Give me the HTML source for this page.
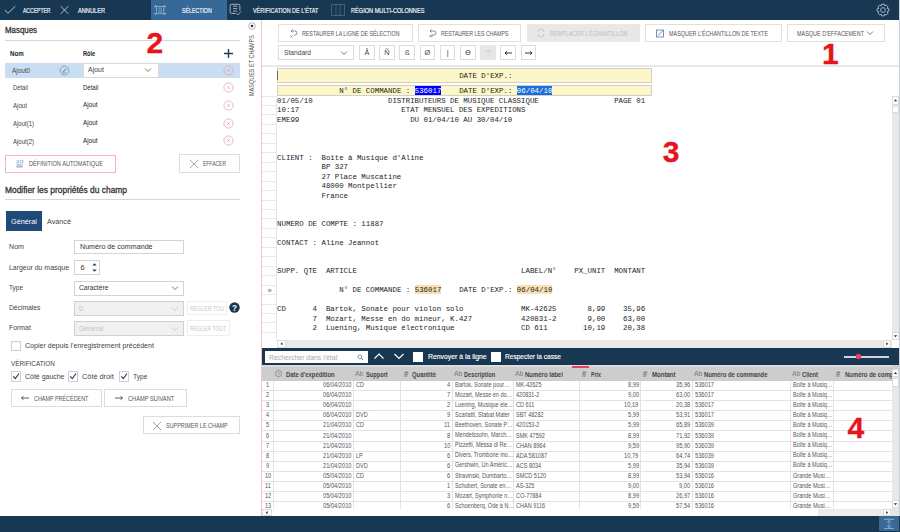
<!DOCTYPE html>
<html><head><meta charset="utf-8"><style>
html,body{margin:0;padding:0;width:900px;height:532px;overflow:hidden;background:#fff}
.a{position:absolute;display:block}
.t{position:absolute;white-space:pre;font-family:"Liberation Sans",sans-serif}
svg.a{overflow:visible}
</style></head><body>
<div class="a" style="left:0px;top:0px;width:900px;height:20px;background:#173753;"></div>
<svg class="a" style="left:0px;top:0px;" width="20" height="20" viewBox="0 0 20 20"><polyline points="5,10 7.9,13.3 15.4,6.2" fill="none" stroke="#c2cdd9" stroke-width="0.9"/></svg>
<div class="t" style="left:23.00px;top:0.78px;line-height:20px;font-size:7.000px;font-weight:400;color:#eef2f6;font-family:'Liberation Sans', sans-serif;transform:scaleX(0.7215);transform-origin:0 0;-webkit-text-stroke:0.2px #eef2f6;">ACCEPTER</div>
<svg class="a" style="left:56px;top:0px;" width="16" height="20" viewBox="0 0 16 20"><path d="M4.7,6.2 L12.3,13.8 M12.3,6.2 L4.7,13.8" stroke="#c2cdd9" stroke-width="0.9"/></svg>
<div class="t" style="left:77.50px;top:0.78px;line-height:20px;font-size:7.000px;font-weight:400;color:#eef2f6;font-family:'Liberation Sans', sans-serif;transform:scaleX(0.8071);transform-origin:0 0;-webkit-text-stroke:0.2px #eef2f6;">ANNULER</div>
<div class="a" style="left:151px;top:0px;width:76px;height:20px;background:#366997;"></div>
<svg class="a" style="left:148px;top:0px;" width="24" height="20" viewBox="0 0 24 20"><rect x="8.6" y="6.5" width="7.2" height="7.2" fill="none" stroke="#9cb7d3" stroke-width="0.8"/><path d="M10.2,8.2h3.7M10.2,10.1h3.7M10.2,12h3.7" stroke="#8fadcc" stroke-width="0.8"/><path d="M6.6,7.2a1.6,1.6 0 0 1 1.6,-1.6 M17.6,7.2a1.6,1.6 0 0 0 -1.6,-1.6 M6.6,13a1.6,1.6 0 0 0 1.6,1.6 M17.6,13a1.6,1.6 0 0 1 -1.6,1.6" fill="none" stroke="#b0c6dd" stroke-width="1"/></svg>
<div class="t" style="left:182.00px;top:0.78px;line-height:20px;font-size:7.000px;font-weight:400;color:#eef2f6;font-family:'Liberation Sans', sans-serif;transform:scaleX(0.7486);transform-origin:0 0;-webkit-text-stroke:0.2px #eef2f6;">SÉLECTION</div>
<svg class="a" style="left:228px;top:2px;" width="16" height="16" viewBox="0 0 16 16"><path d="M11.9,8.5V3.8a1.5,1.5 0 0 0 -1.5,-1.5H3.6a1.5,1.5 0 0 0 -1.5,1.5V10a1.5,1.5 0 0 0 1.5,1.5H7.6" fill="none" stroke="#b3c1cf" stroke-width="0.9"/><path d="M5,4.2h4.3M5,6.6h4.3M5,9.1h4.3" stroke="#aab8c7" stroke-width="0.9"/><path d="M8.4,11.4L9.8,12.8 13,9.6" fill="none" stroke="#b3c1cf" stroke-width="0.9"/></svg>
<div class="t" style="left:252.50px;top:0.78px;line-height:20px;font-size:7.000px;font-weight:400;color:#eef2f6;font-family:'Liberation Sans', sans-serif;transform:scaleX(0.7757);transform-origin:0 0;-webkit-text-stroke:0.2px #eef2f6;">VÉRIFICATION DE L&#x27;ÉTAT</div>
<svg class="a" style="left:330px;top:2px;" width="16" height="16" viewBox="0 0 16 16"><rect x="1.5" y="2.5" width="13" height="11" fill="none" stroke="#8797a8" stroke-width="0.8" stroke-dasharray="1,1"/><path d="M6,2.5v11M10,2.5v11" stroke="#8797a8" stroke-width="0.8" stroke-dasharray="1,1"/></svg>
<div class="t" style="left:351.00px;top:0.78px;line-height:20px;font-size:7.000px;font-weight:400;color:#eef2f6;font-family:'Liberation Sans', sans-serif;transform:scaleX(0.8008);transform-origin:0 0;-webkit-text-stroke:0.2px #eef2f6;">RÉGION MULTI-COLONNES</div>
<svg class="a" style="left:876px;top:3px;" width="14" height="14" viewBox="0 0 14 14"><circle cx="7" cy="7" r="2.4" fill="none" stroke="#aebccb" stroke-width="0.9"/><path d="M11.21,5.41 L12.86,5.69 L12.86,8.31 L11.21,8.59 L11.10,8.86 L12.07,10.21 L10.21,12.07 L8.86,11.10 L8.59,11.21 L8.31,12.86 L5.69,12.86 L5.41,11.21 L5.14,11.10 L3.79,12.07 L1.93,10.21 L2.90,8.86 L2.79,8.59 L1.14,8.31 L1.14,5.69 L2.79,5.41 L2.90,5.14 L1.93,3.79 L3.79,1.93 L5.14,2.90 L5.41,2.79 L5.69,1.14 L8.31,1.14 L8.59,2.79 L8.86,2.90 L10.21,1.93 L12.07,3.79 L11.10,5.14Z" fill="none" stroke="#aebccb" stroke-width="0.9" stroke-linejoin="round"/></svg>
<div class="t" style="left:5.30px;top:20.09px;line-height:20px;font-size:9.000px;font-weight:400;color:#333;font-family:'Liberation Sans', sans-serif;transform:scaleX(0.8763);transform-origin:0 0;-webkit-text-stroke:0.3px #333;">Masques</div>
<div class="a" style="left:5px;top:40px;width:235px;height:1px;background:#d6d6d6;"></div>
<div class="t" style="left:10.20px;top:43.97px;line-height:20px;font-size:7.300px;font-weight:700;color:#222;font-family:'Liberation Sans', sans-serif;transform:scaleX(0.8384);transform-origin:0 0;">Nom</div>
<div class="t" style="left:83.00px;top:43.77px;line-height:20px;font-size:7.300px;font-weight:700;color:#222;font-family:'Liberation Sans', sans-serif;transform:scaleX(0.7712);transform-origin:0 0;">Rôle</div>
<svg class="a" style="left:223px;top:48px;" width="11" height="11" viewBox="0 0 11 11"><path d="M5.5,1v9M1,5.5h9" stroke="#1d3d5f" stroke-width="1.4"/></svg>
<div class="a" style="left:5px;top:63px;width:235px;height:14.7px;background:#c9ddf3;"></div>
<div class="t" style="left:12.10px;top:61.17px;line-height:20px;font-size:7.400px;font-weight:400;color:#444;font-family:'Liberation Sans', sans-serif;transform:scaleX(0.8579);transform-origin:0 0;">Ajout0</div>
<svg class="a" style="left:58.5px;top:64.7px;" width="11" height="11" viewBox="0 0 11 11"><circle cx="5.5" cy="5.5" r="4.4" fill="none" stroke="#7094bb" stroke-width="0.8"/><path d="M3.6,7.4 L7.4,3.6" stroke="#7094bb" stroke-width="1.2"/><path d="M3,8.2 Q4.5,7.2 7.5,8" fill="none" stroke="#7094bb" stroke-width="0.7"/></svg>
<div class="a" style="left:83px;top:62.6px;width:75.5px;height:15.1px;background:#fff;border:1px solid #dadada;box-sizing:border-box;"></div>
<div class="t" style="left:88.00px;top:60.39px;line-height:20px;font-size:7.000px;font-weight:400;color:#444;font-family:'Liberation Sans', sans-serif;">Ajout</div>
<svg class="a" style="left:144px;top:67px;" width="8" height="6" viewBox="0 0 8 6"><polyline points="1,1.5 4,4.5 7,1.5" fill="none" stroke="#555" stroke-width="0.8"/></svg>
<svg class="a" style="left:223px;top:64.7px;" width="11" height="11" viewBox="0 0 11 11"><circle cx="5.5" cy="5.5" r="4.6" fill="none" stroke="#e4a4a8" stroke-width="0.75"/><path d="M3.9,3.9L7.1,7.1M7.1,3.9L3.9,7.1" stroke="#e4a4a8" stroke-width="0.7"/></svg>
<svg class="a" style="left:223px;top:82.3px;" width="11" height="11" viewBox="0 0 11 11"><circle cx="5.5" cy="5.5" r="4.6" fill="none" stroke="#e4a4a8" stroke-width="0.75"/><path d="M3.9,3.9L7.1,7.1M7.1,3.9L3.9,7.1" stroke="#e4a4a8" stroke-width="0.7"/></svg>
<svg class="a" style="left:223px;top:100.0px;" width="11" height="11" viewBox="0 0 11 11"><circle cx="5.5" cy="5.5" r="4.6" fill="none" stroke="#e4a4a8" stroke-width="0.75"/><path d="M3.9,3.9L7.1,7.1M7.1,3.9L3.9,7.1" stroke="#e4a4a8" stroke-width="0.7"/></svg>
<svg class="a" style="left:223px;top:117.7px;" width="11" height="11" viewBox="0 0 11 11"><circle cx="5.5" cy="5.5" r="4.6" fill="none" stroke="#e4a4a8" stroke-width="0.75"/><path d="M3.9,3.9L7.1,7.1M7.1,3.9L3.9,7.1" stroke="#e4a4a8" stroke-width="0.7"/></svg>
<svg class="a" style="left:223px;top:135.4px;" width="11" height="11" viewBox="0 0 11 11"><circle cx="5.5" cy="5.5" r="4.6" fill="none" stroke="#e4a4a8" stroke-width="0.75"/><path d="M3.9,3.9L7.1,7.1M7.1,3.9L3.9,7.1" stroke="#e4a4a8" stroke-width="0.7"/></svg>
<div class="t" style="left:12.80px;top:78.48px;line-height:20px;font-size:7.200px;font-weight:400;color:#444;font-family:'Liberation Sans', sans-serif;transform:scaleX(0.8149);transform-origin:0 0;">Détail</div>
<div class="t" style="left:82.70px;top:77.68px;line-height:20px;font-size:7.200px;font-weight:400;color:#222;font-family:'Liberation Sans', sans-serif;transform:scaleX(0.8366);transform-origin:0 0;">Détail</div>
<div class="t" style="left:12.80px;top:95.98px;line-height:20px;font-size:7.200px;font-weight:400;color:#444;font-family:'Liberation Sans', sans-serif;transform:scaleX(0.8531);transform-origin:0 0;">Ajout</div>
<div class="t" style="left:82.70px;top:95.18px;line-height:20px;font-size:7.200px;font-weight:400;color:#222;font-family:'Liberation Sans', sans-serif;transform:scaleX(0.8836);transform-origin:0 0;">Ajout</div>
<div class="t" style="left:12.80px;top:113.78px;line-height:20px;font-size:7.200px;font-weight:400;color:#444;font-family:'Liberation Sans', sans-serif;transform:scaleX(0.8330);transform-origin:0 0;">Ajout(1)</div>
<div class="t" style="left:82.70px;top:112.98px;line-height:20px;font-size:7.200px;font-weight:400;color:#222;font-family:'Liberation Sans', sans-serif;transform:scaleX(0.8836);transform-origin:0 0;">Ajout</div>
<div class="t" style="left:12.80px;top:131.58px;line-height:20px;font-size:7.200px;font-weight:400;color:#444;font-family:'Liberation Sans', sans-serif;transform:scaleX(0.8330);transform-origin:0 0;">Ajout(2)</div>
<div class="t" style="left:82.70px;top:130.68px;line-height:20px;font-size:7.200px;font-weight:400;color:#222;font-family:'Liberation Sans', sans-serif;transform:scaleX(0.8836);transform-origin:0 0;">Ajout</div>
<div class="t" style="left:146.47px;top:23.21px;line-height:40px;font-size:30px;font-weight:700;color:#e8141c;-webkit-text-stroke:0.35px #e8141c">2</div>
<div class="a" style="left:5px;top:154.6px;width:111px;height:18px;background:#fff;border:1px solid #f9b4c4;box-sizing:border-box;"></div>
<svg class="a" style="left:15px;top:158px;" width="10" height="10" viewBox="0 0 10 10"><path d="M1.5,3h2.5M1.5,5h2.5M1.5,7h6" stroke="#8ea4bb" stroke-width="1"/><path d="M1.3,8.8h6.5" stroke="#8ea4bb" stroke-width="1.2"/><circle cx="6.6" cy="3.6" r="1.5" fill="none" stroke="#8ea4bb" stroke-width="0.9"/></svg>
<div class="t" style="left:28.50px;top:154.48px;line-height:20px;font-size:6.500px;font-weight:400;color:#555;font-family:'Liberation Sans', sans-serif;transform:scaleX(0.8670);transform-origin:0 0;">DÉFINITION AUTOMATIQUE</div>
<div class="a" style="left:179.4px;top:154.4px;width:60.6px;height:18.4px;background:#fff;border:1px solid #dddddd;box-sizing:border-box;"></div>
<svg class="a" style="left:189px;top:159px;" width="10" height="10" viewBox="0 0 10 10"><path d="M1,1L9,9M9,1L1,9" stroke="#7d93aa" stroke-width="0.8"/></svg>
<div class="t" style="left:203.30px;top:154.48px;line-height:20px;font-size:6.500px;font-weight:400;color:#555;font-family:'Liberation Sans', sans-serif;transform:scaleX(0.7673);transform-origin:0 0;">EFFACER</div>
<div class="t" style="left:5.10px;top:179.59px;line-height:20px;font-size:9.000px;font-weight:400;color:#333;font-family:'Liberation Sans', sans-serif;transform:scaleX(0.9344);transform-origin:0 0;-webkit-text-stroke:0.3px #333;">Modifier les propriétés du champ</div>
<div class="a" style="left:5px;top:199px;width:235px;height:1px;background:#d6d6d6;"></div>
<div class="a" style="left:6.3px;top:211.4px;width:35.6px;height:19.6px;background:#1f4a77;"></div>
<div class="t" style="left:11.00px;top:211.95px;line-height:20px;font-size:7.800px;font-weight:400;color:#ffffff;font-family:'Liberation Sans', sans-serif;transform:scaleX(0.9370);transform-origin:0 0;">Général</div>
<div class="t" style="left:47.00px;top:211.95px;line-height:20px;font-size:7.800px;font-weight:400;color:#444;font-family:'Liberation Sans', sans-serif;transform:scaleX(0.9275);transform-origin:0 0;">Avancé</div>
<div class="t" style="left:8.90px;top:237.17px;line-height:20px;font-size:7.300px;font-weight:400;color:#444;font-family:'Liberation Sans', sans-serif;transform:scaleX(0.9732);transform-origin:0 0;">Nom</div>
<div class="t" style="left:8.90px;top:257.97px;line-height:20px;font-size:7.300px;font-weight:400;color:#444;font-family:'Liberation Sans', sans-serif;transform:scaleX(0.9477);transform-origin:0 0;">Largeur du masque</div>
<div class="t" style="left:8.90px;top:278.37px;line-height:20px;font-size:7.300px;font-weight:400;color:#444;font-family:'Liberation Sans', sans-serif;transform:scaleX(0.8846);transform-origin:0 0;">Type</div>
<div class="t" style="left:8.90px;top:298.37px;line-height:20px;font-size:7.300px;font-weight:400;color:#444;font-family:'Liberation Sans', sans-serif;transform:scaleX(0.9244);transform-origin:0 0;">Décimales</div>
<div class="t" style="left:8.90px;top:318.37px;line-height:20px;font-size:7.300px;font-weight:400;color:#444;font-family:'Liberation Sans', sans-serif;transform:scaleX(0.9429);transform-origin:0 0;">Format</div>
<div class="a" style="left:73.8px;top:240px;width:110.6px;height:14.4px;background:#fff;border:1px solid #d4d4d4;box-sizing:border-box;"></div>
<div class="t" style="left:79.60px;top:237.37px;line-height:20px;font-size:7.300px;font-weight:400;color:#333;font-family:'Liberation Sans', sans-serif;transform:scaleX(0.9778);transform-origin:0 0;">Numéro de commande</div>
<div class="a" style="left:73.8px;top:260.4px;width:25.8px;height:14.7px;background:#fff;border:1px solid #d4d4d4;box-sizing:border-box;"></div>
<div class="t" style="left:80.50px;top:258.38px;line-height:20px;font-size:7.300px;font-weight:400;color:#333;font-family:'Liberation Sans', sans-serif;">6</div>
<svg class="a" style="left:91px;top:262px;" width="7" height="11" viewBox="0 0 7 11"><path d="M1.3,3.6L3.5,1.2 5.7,3.6z M1.3,7.4L3.5,9.8 5.7,7.4z" fill="#1d3d5f"/></svg>
<div class="a" style="left:73.8px;top:280.7px;width:110.6px;height:14.9px;background:#fff;border:1px solid #d4d4d4;box-sizing:border-box;"></div>
<div class="t" style="left:79.00px;top:278.47px;line-height:20px;font-size:7.300px;font-weight:400;color:#333;font-family:'Liberation Sans', sans-serif;transform:scaleX(0.9173);transform-origin:0 0;">Caractère</div>
<svg class="a" style="left:171px;top:285px;" width="8" height="6" viewBox="0 0 8 6"><polyline points="1,1.5 4,4.5 7,1.5" fill="none" stroke="#555" stroke-width="0.8"/></svg>
<div class="a" style="left:73.8px;top:301px;width:110.6px;height:14.6px;background:#f0f0f0;border:1px solid #d0d0d0;box-sizing:border-box;"></div>
<div class="t" style="left:79.00px;top:298.88px;line-height:20px;font-size:7.300px;font-weight:400;color:#c4c4c4;font-family:'Liberation Sans', sans-serif;">0</div>
<svg class="a" style="left:171px;top:305.5px;" width="8" height="6" viewBox="0 0 8 6"><polyline points="1,1.5 4,4.5 7,1.5" fill="none" stroke="#c0c0c0" stroke-width="0.8"/></svg>
<div class="a" style="left:187.2px;top:300.5px;width:40.3px;height:14.9px;background:#fff;border:1px solid #eeeeee;box-sizing:border-box;"></div>
<div class="t" style="left:190.00px;top:298.68px;line-height:20px;font-size:6.300px;font-weight:400;color:#c8c8c8;font-family:'Liberation Sans', sans-serif;transform:scaleX(0.8348);transform-origin:0 0;">RÉGLER TOU</div>
<svg class="a" style="left:228.6px;top:302.4px;" width="11" height="11" viewBox="0 0 11 11"><circle cx="5.5" cy="5.5" r="5.2" fill="#173753"/><text x="5.5" y="8.6" text-anchor="middle" font-family="Liberation Sans" font-weight="700" font-size="8.2" fill="#fff">?</text></svg>
<div class="a" style="left:73.8px;top:321px;width:110.6px;height:14.6px;background:#f0f0f0;border:1px solid #d0d0d0;box-sizing:border-box;"></div>
<div class="t" style="left:79.00px;top:318.57px;line-height:20px;font-size:7.300px;font-weight:400;color:#c4c4c4;font-family:'Liberation Sans', sans-serif;transform:scaleX(0.9241);transform-origin:0 0;">Général</div>
<svg class="a" style="left:171px;top:325.5px;" width="8" height="6" viewBox="0 0 8 6"><polyline points="1,1.5 4,4.5 7,1.5" fill="none" stroke="#c0c0c0" stroke-width="0.8"/></svg>
<div class="a" style="left:187px;top:320.3px;width:42.7px;height:15.3px;background:#fff;border:1px solid #eeeeee;box-sizing:border-box;"></div>
<div class="t" style="left:190.00px;top:318.68px;line-height:20px;font-size:6.300px;font-weight:400;color:#c8c8c8;font-family:'Liberation Sans', sans-serif;transform:scaleX(0.8076);transform-origin:0 0;">RÉGLER TOUT</div>
<div class="a" style="left:11px;top:340.7px;width:10.2px;height:10.3px;background:#fff;border:1px solid #cfcfcf;box-sizing:border-box;"></div>
<div class="t" style="left:25.20px;top:335.97px;line-height:20px;font-size:7.300px;font-weight:400;color:#444;font-family:'Liberation Sans', sans-serif;transform:scaleX(0.9679);transform-origin:0 0;">Copier depuis l&#x27;enregistrement précédent</div>
<div class="t" style="left:11.00px;top:353.88px;line-height:20px;font-size:7.300px;font-weight:400;color:#444;font-family:'Liberation Sans', sans-serif;transform:scaleX(0.8663);transform-origin:0 0;">VÉRIFICATION</div>
<div class="a" style="left:11px;top:371.4px;width:10px;height:10.2px;background:#fff;border:1px solid #cfcfcf;box-sizing:border-box;"></div>
<svg class="a" style="left:11px;top:371.4px;" width="10" height="10" viewBox="0 0 10 10"><path d="M2.3,5.3 L4.3,7.6 8,2.5" fill="none" stroke="#1d3d5f" stroke-width="1.1"/></svg>
<div class="t" style="left:24.90px;top:366.77px;line-height:20px;font-size:7.300px;font-weight:400;color:#444;font-family:'Liberation Sans', sans-serif;transform:scaleX(0.9542);transform-origin:0 0;">Côté gauche</div>
<div class="a" style="left:68.4px;top:371.4px;width:10px;height:10.2px;background:#fff;border:1px solid #cfcfcf;box-sizing:border-box;"></div>
<svg class="a" style="left:68.4px;top:371.4px;" width="10" height="10" viewBox="0 0 10 10"><path d="M2.3,5.3 L4.3,7.6 8,2.5" fill="none" stroke="#1d3d5f" stroke-width="1.1"/></svg>
<div class="t" style="left:82.10px;top:366.77px;line-height:20px;font-size:7.300px;font-weight:400;color:#444;font-family:'Liberation Sans', sans-serif;">Côté droit</div>
<div class="a" style="left:118.8px;top:371.4px;width:10px;height:10.2px;background:#fff;border:1px solid #cfcfcf;box-sizing:border-box;"></div>
<svg class="a" style="left:118.8px;top:371.4px;" width="10" height="10" viewBox="0 0 10 10"><path d="M2.3,5.3 L4.3,7.6 8,2.5" fill="none" stroke="#1d3d5f" stroke-width="1.1"/></svg>
<div class="t" style="left:133.30px;top:366.77px;line-height:20px;font-size:7.300px;font-weight:400;color:#444;font-family:'Liberation Sans', sans-serif;transform:scaleX(0.9036);transform-origin:0 0;">Type</div>
<div class="a" style="left:11px;top:389.2px;width:90.7px;height:18.3px;background:#fff;border:1px solid #dddddd;box-sizing:border-box;"></div>
<svg class="a" style="left:20px;top:394px;" width="10" height="8" viewBox="0 0 10 8"><path d="M1.5,4H9M1.5,4L3.5,2.3M1.5,4L3.5,5.7" stroke="#1d3d5f" stroke-width="0.8" fill="none"/></svg>
<div class="t" style="left:34.10px;top:389.08px;line-height:20px;font-size:6.500px;font-weight:400;color:#555;font-family:'Liberation Sans', sans-serif;transform:scaleX(0.8337);transform-origin:0 0;">CHAMP PRÉCÉDENT</div>
<div class="a" style="left:104.2px;top:389.2px;width:83px;height:18.3px;background:#fff;border:1px solid #dddddd;box-sizing:border-box;"></div>
<svg class="a" style="left:114px;top:394px;" width="10" height="8" viewBox="0 0 10 8"><path d="M1,4H8.5M8.5,4L6.5,2.3M8.5,4L6.5,5.7" stroke="#1d3d5f" stroke-width="0.8" fill="none"/></svg>
<div class="t" style="left:127.50px;top:389.08px;line-height:20px;font-size:6.500px;font-weight:400;color:#555;font-family:'Liberation Sans', sans-serif;transform:scaleX(0.8742);transform-origin:0 0;">CHAMP SUIVANT</div>
<div class="a" style="left:142.5px;top:416.3px;width:97.5px;height:17.9px;background:#fff;border:1px solid #dddddd;box-sizing:border-box;"></div>
<svg class="a" style="left:152px;top:420.5px;" width="10" height="10" viewBox="0 0 10 10"><path d="M1,1L9,9M9,1L1,9" stroke="#7d93aa" stroke-width="0.8"/></svg>
<div class="t" style="left:165.50px;top:415.78px;line-height:20px;font-size:6.500px;font-weight:400;color:#555;font-family:'Liberation Sans', sans-serif;transform:scaleX(0.8374);transform-origin:0 0;">SUPPRIMER LE CHAMP</div>
<svg class="a" style="left:248px;top:21.5px;" width="8" height="8" viewBox="0 0 8 8"><circle cx="4" cy="4" r="3.3" fill="none" stroke="#9a9a9a" stroke-width="0.7"/><circle cx="4" cy="4" r="1.3" fill="#1d3d5f"/></svg>
<div class="t" style="left:252.2px;top:96px;transform-origin:0 0;transform:rotate(-90deg) translate(0,-10px);line-height:20px;font-size:6.4px;color:#555;font-family:'Liberation Sans',sans-serif;width:61px;white-space:nowrap"><span style="display:inline-block;transform-origin:0 50%;transform:scaleX(0.8591)">MASQUES ET CHAMPS</span></div>
<div class="a" style="left:261px;top:20px;width:1px;height:496px;background:#f6c2cf;"></div>
<div class="a" style="left:278.3px;top:23.7px;width:134.5px;height:18.000000000000004px;background:#fff;border:1px solid #e0e0e0;box-sizing:border-box;"></div>
<div class="t" style="left:301.70px;top:23.78px;line-height:20px;font-size:6.500px;font-weight:400;color:#555;font-family:'Liberation Sans', sans-serif;transform:scaleX(0.8139);transform-origin:0 0;">RESTAURER LA LIGNE DE SÉLECTION</div>
<svg class="a" style="left:289px;top:28px;" width="9" height="10" viewBox="0 0 9 10"><path d="M2,3h4a2,2 0 0 1 0,4h-1 M2,3l1.5,-1.5M2,3l1.5,1.5" fill="none" stroke="#5b7896" stroke-width="0.8"/><path d="M1.5,7.5l2,2M3.5,7.5l-2,2" stroke="#5b7896" stroke-width="0.7"/></svg>
<div class="a" style="left:417.5px;top:23.7px;width:103.5px;height:18.000000000000004px;background:#fff;border:1px solid #e0e0e0;box-sizing:border-box;"></div>
<div class="t" style="left:440.80px;top:23.78px;line-height:20px;font-size:6.500px;font-weight:400;color:#555;font-family:'Liberation Sans', sans-serif;transform:scaleX(0.8102);transform-origin:0 0;">RESTAURER LES CHAMPS</div>
<svg class="a" style="left:428px;top:28px;" width="9" height="10" viewBox="0 0 9 10"><path d="M2,3h4a2,2 0 0 1 0,4h-2 M2,3l1.5,-1.5M2,3l1.5,1.5" fill="none" stroke="#5b7896" stroke-width="0.8"/><path d="M1.5,7.3h3M1.5,8.6h3" stroke="#5b7896" stroke-width="0.7"/></svg>
<div class="a" style="left:526.7px;top:23.7px;width:113.29999999999995px;height:18.000000000000004px;background:#e8e8e8;"></div>
<div class="t" style="left:550.00px;top:23.78px;line-height:20px;font-size:6.500px;font-weight:400;color:#bdbdbd;font-family:'Liberation Sans', sans-serif;transform:scaleX(0.8345);transform-origin:0 0;">REMPLACER L&#x27;ÉCHANTILLON</div>
<svg class="a" style="left:535.5px;top:28px;" width="10" height="10" viewBox="0 0 10 10"><path d="M2,4a3,3 0 0 1 6,0M8,6a3,3 0 0 1 -6,0" fill="none" stroke="#c4c4c4" stroke-width="0.8"/></svg>
<div class="a" style="left:645.2px;top:23.7px;width:136.39999999999998px;height:18.000000000000004px;background:#fff;border:1px solid #e0e0e0;box-sizing:border-box;"></div>
<div class="t" style="left:668.90px;top:23.78px;line-height:20px;font-size:6.500px;font-weight:400;color:#555;font-family:'Liberation Sans', sans-serif;transform:scaleX(0.8354);transform-origin:0 0;">MASQUER L&#x27;ÉCHANTILLON DE TEXTE</div>
<svg class="a" style="left:655px;top:28px;" width="10" height="10" viewBox="0 0 10 10"><rect x="1.5" y="2" width="7" height="7" fill="none" stroke="#5b7896" stroke-width="0.8"/><path d="M3,7.5L8.5,2" stroke="#5b7896" stroke-width="0.9"/></svg>
<div class="a" style="left:786.5px;top:23.7px;width:98.29999999999995px;height:18.000000000000004px;background:#fff;border:1px solid #e0e0e0;box-sizing:border-box;"></div>
<div class="t" style="left:797.00px;top:23.78px;line-height:20px;font-size:6.500px;font-weight:400;color:#555;font-family:'Liberation Sans', sans-serif;transform:scaleX(0.8416);transform-origin:0 0;">MASQUE D&#x27;EFFACEMENT</div>
<svg class="a" style="left:866px;top:30px;" width="8" height="6" viewBox="0 0 8 6"><polyline points="1,1.5 4,4.5 7,1.5" fill="none" stroke="#555" stroke-width="0.8"/></svg>
<div class="a" style="left:278px;top:45.3px;width:76px;height:15.2px;background:#fff;border:1px solid #dcdcdc;box-sizing:border-box;"></div>
<div class="t" style="left:283.70px;top:43.07px;line-height:20px;font-size:7.300px;font-weight:400;color:#444;font-family:'Liberation Sans', sans-serif;transform:scaleX(0.9113);transform-origin:0 0;">Standard</div>
<svg class="a" style="left:340px;top:50px;" width="8" height="6" viewBox="0 0 8 6"><polyline points="1,1.5 4,4.5 7,1.5" fill="none" stroke="#555" stroke-width="0.8"/></svg>
<div class="a" style="left:359.0px;top:45.3px;width:15.7px;height:15.2px;background:#fff;border:1px solid #dcdcdc;box-sizing:border-box;"></div>
<div class="a" style="left:379.2px;top:45.3px;width:15.7px;height:15.2px;background:#fff;border:1px solid #dcdcdc;box-sizing:border-box;"></div>
<div class="a" style="left:399.4px;top:45.3px;width:15.7px;height:15.2px;background:#fff;border:1px solid #dcdcdc;box-sizing:border-box;"></div>
<div class="a" style="left:419.6px;top:45.3px;width:15.7px;height:15.2px;background:#fff;border:1px solid #dcdcdc;box-sizing:border-box;"></div>
<div class="a" style="left:439.8px;top:45.3px;width:15.7px;height:15.2px;background:#fff;border:1px solid #dcdcdc;box-sizing:border-box;"></div>
<div class="a" style="left:460.0px;top:45.3px;width:15.7px;height:15.2px;background:#fff;border:1px solid #dcdcdc;box-sizing:border-box;"></div>
<div class="a" style="left:480.2px;top:45.3px;width:15.7px;height:15.2px;background:#e6e6e6;"></div>
<div class="a" style="left:500.4px;top:45.3px;width:15.7px;height:15.2px;background:#fff;border:1px solid #dcdcdc;box-sizing:border-box;"></div>
<div class="a" style="left:520.6px;top:45.3px;width:15.7px;height:15.2px;background:#fff;border:1px solid #dcdcdc;box-sizing:border-box;"></div>
<div class="t" style="left:359.0px;width:15.7px;text-align:center;top:43px;line-height:20px;font-size:7.4px;color:#444;font-family:'Liberation Sans',sans-serif">Å</div>
<div class="t" style="left:379.2px;width:15.7px;text-align:center;top:43px;line-height:20px;font-size:7.4px;color:#444;font-family:'Liberation Sans',sans-serif">Ñ</div>
<div class="t" style="left:399.4px;width:15.7px;text-align:center;top:43px;line-height:20px;font-size:7.4px;color:#444;font-family:'Liberation Sans',sans-serif">ß</div>
<div class="t" style="left:419.6px;width:15.7px;text-align:center;top:43px;line-height:20px;font-size:7.4px;color:#444;font-family:'Liberation Sans',sans-serif">Ø</div>
<div class="t" style="left:439.8px;width:15.7px;text-align:center;top:43px;line-height:20px;font-size:7.4px;color:#444;font-family:'Liberation Sans',sans-serif">|</div>
<div class="t" style="left:460.0px;width:15.7px;text-align:center;top:43px;line-height:20px;font-size:7.4px;color:#444;font-family:'Liberation Sans',sans-serif">ϴ</div>
<svg class="a" style="left:484.2px;top:48px;" width="8" height="8" viewBox="0 0 8 8"><path d="M2,3H6V5" stroke="#c0c0c0" stroke-width="0.8" fill="none"/></svg>
<svg class="a" style="left:502.9px;top:49px;" width="11" height="8" viewBox="0 0 11 8"><path d="M2,4H9M2,4L4,2.3M2,4L4,5.7" stroke="#222" stroke-width="0.9" fill="none"/></svg>
<svg class="a" style="left:523.1px;top:49px;" width="11" height="8" viewBox="0 0 11 8"><path d="M2,4H9M9,4L7,2.3M9,4L7,5.7" stroke="#222" stroke-width="0.9" fill="none"/></svg>
<div class="t" style="left:822.04px;top:34.41px;line-height:40px;font-size:30px;font-weight:700;color:#e8141c;-webkit-text-stroke:0.35px #e8141c">1</div>
<div class="a" style="left:262px;top:65px;width:638px;height:1.6px;background:#e8e8e8;"></div>
<div class="a" style="left:262px;top:66.6px;width:638px;height:273.6px;background:#fff;"></div>
<div class="a" style="left:262px;top:96px;width:15px;height:1px;background:#e8e8e8;"></div>
<div class="a" style="left:262px;top:105px;width:15px;height:1px;background:#e8e8e8;"></div>
<div class="a" style="left:262px;top:114px;width:15px;height:1px;background:#e8e8e8;"></div>
<div class="a" style="left:262px;top:124px;width:15px;height:1px;background:#e8e8e8;"></div>
<div class="a" style="left:262px;top:133px;width:15px;height:1px;background:#e8e8e8;"></div>
<div class="a" style="left:262px;top:143px;width:15px;height:1px;background:#e8e8e8;"></div>
<div class="a" style="left:262px;top:152px;width:15px;height:1px;background:#e8e8e8;"></div>
<div class="a" style="left:262px;top:162px;width:15px;height:1px;background:#e8e8e8;"></div>
<div class="a" style="left:262px;top:171px;width:15px;height:1px;background:#e8e8e8;"></div>
<div class="a" style="left:262px;top:181px;width:15px;height:1px;background:#e8e8e8;"></div>
<div class="a" style="left:262px;top:190px;width:15px;height:1px;background:#e8e8e8;"></div>
<div class="a" style="left:262px;top:200px;width:15px;height:1px;background:#e8e8e8;"></div>
<div class="a" style="left:262px;top:209px;width:15px;height:1px;background:#e8e8e8;"></div>
<div class="a" style="left:262px;top:218px;width:15px;height:1px;background:#e8e8e8;"></div>
<div class="a" style="left:262px;top:228px;width:15px;height:1px;background:#e8e8e8;"></div>
<div class="a" style="left:262px;top:237px;width:15px;height:1px;background:#e8e8e8;"></div>
<div class="a" style="left:262px;top:247px;width:15px;height:1px;background:#e8e8e8;"></div>
<div class="a" style="left:262px;top:256px;width:15px;height:1px;background:#e8e8e8;"></div>
<div class="a" style="left:262px;top:266px;width:15px;height:1px;background:#e8e8e8;"></div>
<div class="a" style="left:262px;top:275px;width:15px;height:1px;background:#e8e8e8;"></div>
<div class="a" style="left:262px;top:285px;width:15px;height:1px;background:#e8e8e8;"></div>
<div class="a" style="left:262px;top:294px;width:15px;height:1px;background:#e8e8e8;"></div>
<div class="a" style="left:262px;top:304px;width:15px;height:1px;background:#e8e8e8;"></div>
<div class="a" style="left:262px;top:313px;width:15px;height:1px;background:#e8e8e8;"></div>
<div class="a" style="left:262px;top:322px;width:15px;height:1px;background:#e8e8e8;"></div>
<div class="a" style="left:262px;top:332px;width:15px;height:1px;background:#e8e8e8;"></div>
<div class="a" style="left:276.3px;top:96px;width:0.9px;height:244.2px;background:#e6e6e6;"></div>
<div class="a" style="left:277px;top:68.2px;width:374.5px;height:15px;background:#fcf6c9;border:1px solid #d2d0c4;box-sizing:border-box;"></div>
<div class="a" style="left:277px;top:85.3px;width:374.5px;height:10.4px;background:#fcf6c9;border:1px solid #d2d0c4;box-sizing:border-box;"></div>
<div class="a" style="left:277.2px;top:71px;width:1px;height:9.3px;background:#666;"></div>
<div class="t" style="left:459.14px;top:66.37px;line-height:20px;font-size:7.400px;color:#242424;font-family:'Liberation Mono',monospace;letter-spacing:0.000px">DATE D&#x27;EXP.:</div>
<div class="t" style="left:339.26px;top:81.37px;line-height:20px;font-size:7.400px;color:#242424;font-family:'Liberation Mono',monospace;letter-spacing:0.000px">N° DE COMMANDE : </div>
<div class="a" style="left:414.74px;top:85.95px;width:26.64px;height:8.9px;background:#0000ff;"></div>
<div class="t" style="left:414.74px;top:81.37px;line-height:20px;font-size:7.400px;color:#fff;font-family:'Liberation Mono',monospace;letter-spacing:0.000px">536017</div>
<div class="t" style="left:459.14px;top:81.37px;line-height:20px;font-size:7.400px;color:#242424;font-family:'Liberation Mono',monospace;letter-spacing:0.000px">DATE D&#x27;EXP.: </div>
<div class="a" style="left:516.86px;top:85.95px;width:35.52px;height:8.9px;background:#1a6fd6;"></div>
<div class="t" style="left:516.86px;top:81.37px;line-height:20px;font-size:7.400px;color:#fff;font-family:'Liberation Mono',monospace;letter-spacing:0.000px">06/04/10</div>
<div class="t" style="left:277.10px;top:90.97px;line-height:20px;font-size:7.400px;color:#242424;font-family:'Liberation Mono',monospace;letter-spacing:0.000px">01/05/10                 DISTRIBUTEURS DE MUSIQUE CLASSIQUE                 PAGE 01</div>
<div class="t" style="left:277.10px;top:100.43px;line-height:20px;font-size:7.400px;color:#242424;font-family:'Liberation Mono',monospace;letter-spacing:0.000px">10:17                       ETAT MENSUEL DES EXPEDITIONS</div>
<div class="t" style="left:277.10px;top:109.89px;line-height:20px;font-size:7.400px;color:#242424;font-family:'Liberation Mono',monospace;letter-spacing:0.000px">EME99                         DU 01/04/10 AU 30/04/10</div>
<div class="t" style="left:277.10px;top:147.73px;line-height:20px;font-size:7.400px;color:#242424;font-family:'Liberation Mono',monospace;letter-spacing:0.000px">CLIENT :  Boîte à Musique d&#x27;Aline</div>
<div class="t" style="left:277.10px;top:157.19px;line-height:20px;font-size:7.400px;color:#242424;font-family:'Liberation Mono',monospace;letter-spacing:0.000px">          BP 327</div>
<div class="t" style="left:277.10px;top:166.65px;line-height:20px;font-size:7.400px;color:#242424;font-family:'Liberation Mono',monospace;letter-spacing:0.000px">          27 Place Muscatine</div>
<div class="t" style="left:277.10px;top:176.11px;line-height:20px;font-size:7.400px;color:#242424;font-family:'Liberation Mono',monospace;letter-spacing:0.000px">          48000 Montpellier</div>
<div class="t" style="left:277.10px;top:185.57px;line-height:20px;font-size:7.400px;color:#242424;font-family:'Liberation Mono',monospace;letter-spacing:0.000px">          France</div>
<div class="t" style="left:277.10px;top:213.95px;line-height:20px;font-size:7.400px;color:#242424;font-family:'Liberation Mono',monospace;letter-spacing:0.000px">NUMERO DE COMPTE : 11887</div>
<div class="t" style="left:277.10px;top:232.87px;line-height:20px;font-size:7.400px;color:#242424;font-family:'Liberation Mono',monospace;letter-spacing:0.000px">CONTACT : Aline Jeannot</div>
<div class="t" style="left:277.10px;top:261.25px;line-height:20px;font-size:7.400px;color:#242424;font-family:'Liberation Mono',monospace;letter-spacing:0.000px">SUPP. QTE  ARTICLE                                     LABEL/N°    PX_UNIT  MONTANT</div>
<div class="t" style="left:277.10px;top:299.09px;line-height:20px;font-size:7.400px;color:#242424;font-family:'Liberation Mono',monospace;letter-spacing:0.000px">CD      4  Bartok, Sonate pour violon solo             MK-42625       8,99    35,96</div>
<div class="t" style="left:277.10px;top:308.55px;line-height:20px;font-size:7.400px;color:#242424;font-family:'Liberation Mono',monospace;letter-spacing:0.000px">        7  Mozart, Messe en do mineur, K.427           420831-2       9,00    63,00</div>
<div class="t" style="left:277.10px;top:318.01px;line-height:20px;font-size:7.400px;color:#242424;font-family:'Liberation Mono',monospace;letter-spacing:0.000px">        2  Luening, Musique électronique               CD 611        10,19    20,38</div>
<div class="t" style="left:339.26px;top:280.17px;line-height:20px;font-size:7.400px;color:#242424;font-family:'Liberation Mono',monospace;letter-spacing:0.000px">N° DE COMMANDE : </div>
<div class="a" style="left:414.74px;top:284.75000000000006px;width:26.64px;height:8.9px;background:#f9e0b3;"></div>
<div class="t" style="left:414.74px;top:280.17px;line-height:20px;font-size:7.400px;color:#242424;font-family:'Liberation Mono',monospace;letter-spacing:0.000px">536017</div>
<div class="t" style="left:459.14px;top:280.17px;line-height:20px;font-size:7.400px;color:#242424;font-family:'Liberation Mono',monospace;letter-spacing:0.000px">DATE D&#x27;EXP.: </div>
<div class="a" style="left:516.86px;top:284.75000000000006px;width:35.52px;height:8.9px;background:#f9e0b3;"></div>
<div class="t" style="left:516.86px;top:280.17px;line-height:20px;font-size:7.400px;color:#242424;font-family:'Liberation Mono',monospace;letter-spacing:0.000px">06/04/10</div>
<div class="t" style="left:262px;width:15px;text-align:center;top:280.80px;line-height:20px;font-size:7.5px;color:#3a5a80;font-family:'Liberation Sans',sans-serif">»</div>
<div class="a" style="left:892px;top:96px;width:7.2px;height:244.2px;background:#e8e8e8;"></div>
<div class="a" style="left:892px;top:96px;width:7.2px;height:8.6px;background:#fff;border:0.6px solid #dcdcdc;box-sizing:border-box;"></div>
<svg class="a" style="left:892px;top:96px;" width="7" height="8.6" viewBox="0 0 7 8.6"><path d="M1.8,5.3L3.5,3.3 5.2,5.3z" fill="#333"/></svg>
<div class="a" style="left:892px;top:105.5px;width:7px;height:7.6px;background:#fff;border:0.6px solid #dcdcdc;box-sizing:border-box;"></div>
<div class="a" style="left:892px;top:331.8px;width:7.2px;height:8.4px;background:#fff;border:0.6px solid #dcdcdc;box-sizing:border-box;"></div>
<svg class="a" style="left:892px;top:331.8px;" width="7" height="8.4" viewBox="0 0 7 8.4"><path d="M1.8,3.2L3.5,5.2 5.2,3.2z" fill="#333"/></svg>
<div class="a" style="left:899px;top:0px;width:1px;height:516px;background:#c8d0da;"></div>
<div class="a" style="left:277px;top:340.2px;width:615px;height:7.6px;background:#e9e9e9;"></div>
<div class="a" style="left:277.3px;top:340.2px;width:9px;height:7.6px;background:#fff;border:0.6px solid #dcdcdc;box-sizing:border-box;"></div>
<svg class="a" style="left:277.3px;top:340.2px;" width="9" height="7.6" viewBox="0 0 9 7.6"><path d="M5.5,2.2L3.5,3.8 5.5,5.4z" fill="#333"/></svg>
<div class="a" style="left:883px;top:340.2px;width:8.4px;height:7.6px;background:#fff;border:0.6px solid #dcdcdc;box-sizing:border-box;"></div>
<svg class="a" style="left:883px;top:340.2px;" width="8.4" height="7.6" viewBox="0 0 8.4 7.6"><path d="M3.3,2.2L5.3,3.8 3.3,5.4z" fill="#333"/></svg>
<div class="a" style="left:892px;top:340.2px;width:7px;height:7.6px;background:#fff;"></div>
<div class="a" style="left:262px;top:348px;width:637px;height:17.4px;background:#173753;"></div>
<div class="a" style="left:264.8px;top:351px;width:103.1px;height:12.1px;background:#fff;"></div>
<div class="t" style="left:269.10px;top:347.76px;line-height:20px;font-size:7.600px;font-weight:400;color:#a8a8a8;font-family:'Liberation Sans', sans-serif;transform:scaleX(0.9036);transform-origin:0 0;">Rechercher dans l&#x27;état</div>
<svg class="a" style="left:357px;top:353.5px;" width="7" height="7" viewBox="0 0 7 7"><circle cx="2.9" cy="2.9" r="1.9" fill="none" stroke="#5a7fa6" stroke-width="0.8"/><path d="M4.2,4.2L6,6" stroke="#5a7fa6" stroke-width="1"/></svg>
<svg class="a" style="left:372px;top:351px;" width="14" height="10" viewBox="0 0 14 10"><polyline points="2.5,7.5 7,3 11.5,7.5" fill="none" stroke="#fff" stroke-width="1.2"/></svg>
<svg class="a" style="left:392px;top:351px;" width="14" height="10" viewBox="0 0 14 10"><polyline points="2.5,3 7,7.5 11.5,3" fill="none" stroke="#fff" stroke-width="1.2"/></svg>
<div class="a" style="left:413.3px;top:352px;width:9.8px;height:9.7px;background:#fff;"></div>
<div class="t" style="left:427.60px;top:347.46px;line-height:20px;font-size:7.500px;font-weight:400;color:#fff;font-family:'Liberation Sans', sans-serif;transform:scaleX(0.9127);transform-origin:0 0;-webkit-text-stroke:0.15px #fff;">Renvoyer à la ligne</div>
<div class="a" style="left:491.2px;top:352px;width:9.8px;height:9.7px;background:#fff;"></div>
<div class="t" style="left:505.20px;top:347.46px;line-height:20px;font-size:7.500px;font-weight:400;color:#fff;font-family:'Liberation Sans', sans-serif;transform:scaleX(0.8780);transform-origin:0 0;-webkit-text-stroke:0.15px #fff;">Respecter la casse</div>
<div class="a" style="left:844px;top:356.1px;width:45px;height:1.5px;background:#d0d6dd;"></div>
<svg class="a" style="left:854px;top:352.3px;" width="9" height="9" viewBox="0 0 9 9"><circle cx="4.5" cy="4.5" r="2.7" fill="#e9405f"/></svg>
<div class="a" style="left:262px;top:365px;width:630px;height:16px;background:#cdcdcd;"></div>
<div class="a" style="left:262px;top:365px;width:630px;height:1.5px;background:#dcdcdc;"></div>
<div class="a" style="left:572px;top:365.6px;width:17.2px;height:2.3px;background:#e8405e;"></div>
<div class="a" style="left:262px;top:381px;width:630px;height:128px;background:#fff;"></div>
<div class="a" style="left:262px;top:390px;width:630px;height:1px;background:#e3e3e3;"></div>
<div class="a" style="left:262px;top:400px;width:630px;height:1px;background:#e3e3e3;"></div>
<div class="a" style="left:262px;top:410px;width:630px;height:1px;background:#e3e3e3;"></div>
<div class="a" style="left:262px;top:420px;width:630px;height:1px;background:#e3e3e3;"></div>
<div class="a" style="left:262px;top:430px;width:630px;height:1px;background:#e3e3e3;"></div>
<div class="a" style="left:262px;top:441px;width:630px;height:1px;background:#e3e3e3;"></div>
<div class="a" style="left:262px;top:451px;width:630px;height:1px;background:#e3e3e3;"></div>
<div class="a" style="left:262px;top:461px;width:630px;height:1px;background:#e3e3e3;"></div>
<div class="a" style="left:262px;top:471px;width:630px;height:1px;background:#e3e3e3;"></div>
<div class="a" style="left:262px;top:481px;width:630px;height:1px;background:#e3e3e3;"></div>
<div class="a" style="left:262px;top:491px;width:630px;height:1px;background:#e3e3e3;"></div>
<div class="a" style="left:262px;top:501px;width:630px;height:1px;background:#e3e3e3;"></div>
<div class="a" style="left:273px;top:381px;width:1px;height:128px;background:#e3e3e3;"></div>
<div class="a" style="left:353px;top:381px;width:1px;height:128px;background:#e3e3e3;"></div>
<div class="a" style="left:400px;top:381px;width:1px;height:128px;background:#e3e3e3;"></div>
<div class="a" style="left:452px;top:381px;width:1px;height:128px;background:#e3e3e3;"></div>
<div class="a" style="left:513px;top:381px;width:1px;height:128px;background:#e3e3e3;"></div>
<div class="a" style="left:579px;top:381px;width:1px;height:128px;background:#e3e3e3;"></div>
<div class="a" style="left:640px;top:381px;width:1px;height:128px;background:#e3e3e3;"></div>
<div class="a" style="left:692px;top:381px;width:1px;height:128px;background:#e3e3e3;"></div>
<div class="a" style="left:790px;top:381px;width:1px;height:128px;background:#e3e3e3;"></div>
<div class="a" style="left:833px;top:381px;width:1px;height:128px;background:#e3e3e3;"></div>
<div class="a" style="left:262px;top:380.8px;width:630px;height:128px;overflow:hidden">
<div class="t" style="left:4.46px;top:-5.62px;line-height:20px;font-size:6.305px;font-weight:400;color:#555;font-family:'Liberation Sans', sans-serif;transform:scaleX(0.8763);transform-origin:0 0;">1</div>
<div class="t" style="left:61.30px;top:-5.62px;line-height:20px;font-size:6.500px;font-weight:400;color:#555;font-family:'Liberation Sans', sans-serif;transform:scaleX(0.8760);transform-origin:0 0;">06/04/2010</div>
<div class="t" style="left:94.10px;top:-5.62px;line-height:20px;font-size:6.500px;font-weight:400;color:#555;font-family:'Liberation Sans', sans-serif;transform:scaleX(0.8500);transform-origin:0 0;">CD</div>
<div class="t" style="left:185.13px;top:-5.62px;line-height:20px;font-size:6.500px;font-weight:400;color:#555;font-family:'Liberation Sans', sans-serif;transform:scaleX(0.8760);transform-origin:0 0;">4</div>
<div class="t" style="left:192.60px;top:-5.89px;line-height:20px;font-size:6.500px;font-weight:400;color:#555;font-family:'Liberation Sans', sans-serif;transform:scaleX(0.8500);transform-origin:0 0;">Bartok, Sonate pour…</div>
<div class="t" style="left:253.80px;top:-5.62px;line-height:20px;font-size:6.500px;font-weight:400;color:#555;font-family:'Liberation Sans', sans-serif;transform:scaleX(0.8500);transform-origin:0 0;">MK-42625</div>
<div class="t" style="left:365.62px;top:-5.62px;line-height:20px;font-size:6.500px;font-weight:400;color:#555;font-family:'Liberation Sans', sans-serif;transform:scaleX(0.8760);transform-origin:0 0;">8,99</div>
<div class="t" style="left:414.15px;top:-5.62px;line-height:20px;font-size:6.500px;font-weight:400;color:#555;font-family:'Liberation Sans', sans-serif;transform:scaleX(0.8760);transform-origin:0 0;">35,96</div>
<div class="t" style="left:432.70px;top:-5.62px;line-height:20px;font-size:6.500px;font-weight:400;color:#555;font-family:'Liberation Sans', sans-serif;transform:scaleX(0.8760);transform-origin:0 0;">536017</div>
<div class="t" style="left:530.80px;top:-5.89px;line-height:20px;font-size:6.500px;font-weight:400;color:#555;font-family:'Liberation Sans', sans-serif;transform:scaleX(0.8500);transform-origin:0 0;">Boîte à Musiq…</div>
<div class="t" style="left:4.46px;top:4.45px;line-height:20px;font-size:6.305px;font-weight:400;color:#555;font-family:'Liberation Sans', sans-serif;transform:scaleX(0.8763);transform-origin:0 0;">2</div>
<div class="t" style="left:61.30px;top:4.45px;line-height:20px;font-size:6.500px;font-weight:400;color:#555;font-family:'Liberation Sans', sans-serif;transform:scaleX(0.8760);transform-origin:0 0;">06/04/2010</div>
<div class="t" style="left:185.13px;top:4.45px;line-height:20px;font-size:6.500px;font-weight:400;color:#555;font-family:'Liberation Sans', sans-serif;transform:scaleX(0.8760);transform-origin:0 0;">7</div>
<div class="t" style="left:192.60px;top:4.18px;line-height:20px;font-size:6.500px;font-weight:400;color:#555;font-family:'Liberation Sans', sans-serif;transform:scaleX(0.8500);transform-origin:0 0;">Mozart, Messe en do…</div>
<div class="t" style="left:253.80px;top:4.45px;line-height:20px;font-size:6.500px;font-weight:400;color:#555;font-family:'Liberation Sans', sans-serif;transform:scaleX(0.8500);transform-origin:0 0;">420831-2</div>
<div class="t" style="left:365.62px;top:4.45px;line-height:20px;font-size:6.500px;font-weight:400;color:#555;font-family:'Liberation Sans', sans-serif;transform:scaleX(0.8760);transform-origin:0 0;">9,00</div>
<div class="t" style="left:414.15px;top:4.45px;line-height:20px;font-size:6.500px;font-weight:400;color:#555;font-family:'Liberation Sans', sans-serif;transform:scaleX(0.8760);transform-origin:0 0;">63,00</div>
<div class="t" style="left:432.70px;top:4.45px;line-height:20px;font-size:6.500px;font-weight:400;color:#555;font-family:'Liberation Sans', sans-serif;transform:scaleX(0.8760);transform-origin:0 0;">536017</div>
<div class="t" style="left:530.80px;top:4.18px;line-height:20px;font-size:6.500px;font-weight:400;color:#555;font-family:'Liberation Sans', sans-serif;transform:scaleX(0.8500);transform-origin:0 0;">Boîte à Musiq…</div>
<div class="t" style="left:4.46px;top:14.52px;line-height:20px;font-size:6.305px;font-weight:400;color:#555;font-family:'Liberation Sans', sans-serif;transform:scaleX(0.8763);transform-origin:0 0;">3</div>
<div class="t" style="left:61.30px;top:14.52px;line-height:20px;font-size:6.500px;font-weight:400;color:#555;font-family:'Liberation Sans', sans-serif;transform:scaleX(0.8760);transform-origin:0 0;">06/04/2010</div>
<div class="t" style="left:185.13px;top:14.52px;line-height:20px;font-size:6.500px;font-weight:400;color:#555;font-family:'Liberation Sans', sans-serif;transform:scaleX(0.8760);transform-origin:0 0;">2</div>
<div class="t" style="left:192.60px;top:14.25px;line-height:20px;font-size:6.500px;font-weight:400;color:#555;font-family:'Liberation Sans', sans-serif;transform:scaleX(0.8500);transform-origin:0 0;">Luening, Musique éle…</div>
<div class="t" style="left:253.80px;top:14.52px;line-height:20px;font-size:6.500px;font-weight:400;color:#555;font-family:'Liberation Sans', sans-serif;transform:scaleX(0.8500);transform-origin:0 0;">CD 611</div>
<div class="t" style="left:362.45px;top:14.52px;line-height:20px;font-size:6.500px;font-weight:400;color:#555;font-family:'Liberation Sans', sans-serif;transform:scaleX(0.8760);transform-origin:0 0;">10,19</div>
<div class="t" style="left:414.15px;top:14.52px;line-height:20px;font-size:6.500px;font-weight:400;color:#555;font-family:'Liberation Sans', sans-serif;transform:scaleX(0.8760);transform-origin:0 0;">20,38</div>
<div class="t" style="left:432.70px;top:14.52px;line-height:20px;font-size:6.500px;font-weight:400;color:#555;font-family:'Liberation Sans', sans-serif;transform:scaleX(0.8760);transform-origin:0 0;">536017</div>
<div class="t" style="left:530.80px;top:14.25px;line-height:20px;font-size:6.500px;font-weight:400;color:#555;font-family:'Liberation Sans', sans-serif;transform:scaleX(0.8500);transform-origin:0 0;">Boîte à Musiq…</div>
<div class="t" style="left:4.46px;top:24.59px;line-height:20px;font-size:6.305px;font-weight:400;color:#555;font-family:'Liberation Sans', sans-serif;transform:scaleX(0.8763);transform-origin:0 0;">4</div>
<div class="t" style="left:61.30px;top:24.59px;line-height:20px;font-size:6.500px;font-weight:400;color:#555;font-family:'Liberation Sans', sans-serif;transform:scaleX(0.8760);transform-origin:0 0;">06/04/2010</div>
<div class="t" style="left:94.10px;top:24.59px;line-height:20px;font-size:6.500px;font-weight:400;color:#555;font-family:'Liberation Sans', sans-serif;transform:scaleX(0.8500);transform-origin:0 0;">DVD</div>
<div class="t" style="left:185.13px;top:24.59px;line-height:20px;font-size:6.500px;font-weight:400;color:#555;font-family:'Liberation Sans', sans-serif;transform:scaleX(0.8760);transform-origin:0 0;">9</div>
<div class="t" style="left:192.60px;top:24.32px;line-height:20px;font-size:6.500px;font-weight:400;color:#555;font-family:'Liberation Sans', sans-serif;transform:scaleX(0.8500);transform-origin:0 0;">Scarlatti, Stabat Mater</div>
<div class="t" style="left:253.80px;top:24.59px;line-height:20px;font-size:6.500px;font-weight:400;color:#555;font-family:'Liberation Sans', sans-serif;transform:scaleX(0.8500);transform-origin:0 0;">SBT 48282</div>
<div class="t" style="left:365.62px;top:24.59px;line-height:20px;font-size:6.500px;font-weight:400;color:#555;font-family:'Liberation Sans', sans-serif;transform:scaleX(0.8760);transform-origin:0 0;">5,99</div>
<div class="t" style="left:414.15px;top:24.59px;line-height:20px;font-size:6.500px;font-weight:400;color:#555;font-family:'Liberation Sans', sans-serif;transform:scaleX(0.8760);transform-origin:0 0;">53,91</div>
<div class="t" style="left:432.70px;top:24.59px;line-height:20px;font-size:6.500px;font-weight:400;color:#555;font-family:'Liberation Sans', sans-serif;transform:scaleX(0.8760);transform-origin:0 0;">536017</div>
<div class="t" style="left:530.80px;top:24.32px;line-height:20px;font-size:6.500px;font-weight:400;color:#555;font-family:'Liberation Sans', sans-serif;transform:scaleX(0.8500);transform-origin:0 0;">Boîte à Musiq…</div>
<div class="t" style="left:4.46px;top:34.66px;line-height:20px;font-size:6.305px;font-weight:400;color:#555;font-family:'Liberation Sans', sans-serif;transform:scaleX(0.8763);transform-origin:0 0;">5</div>
<div class="t" style="left:61.30px;top:34.66px;line-height:20px;font-size:6.500px;font-weight:400;color:#555;font-family:'Liberation Sans', sans-serif;transform:scaleX(0.8760);transform-origin:0 0;">21/04/2010</div>
<div class="t" style="left:94.10px;top:34.66px;line-height:20px;font-size:6.500px;font-weight:400;color:#555;font-family:'Liberation Sans', sans-serif;transform:scaleX(0.8500);transform-origin:0 0;">CD</div>
<div class="t" style="left:182.39px;top:34.66px;line-height:20px;font-size:6.500px;font-weight:400;color:#555;font-family:'Liberation Sans', sans-serif;transform:scaleX(0.8760);transform-origin:0 0;">11</div>
<div class="t" style="left:192.60px;top:34.39px;line-height:20px;font-size:6.500px;font-weight:400;color:#555;font-family:'Liberation Sans', sans-serif;transform:scaleX(0.8500);transform-origin:0 0;">Beethoven, Sonate P…</div>
<div class="t" style="left:253.80px;top:34.66px;line-height:20px;font-size:6.500px;font-weight:400;color:#555;font-family:'Liberation Sans', sans-serif;transform:scaleX(0.8500);transform-origin:0 0;">420153-2</div>
<div class="t" style="left:365.62px;top:34.66px;line-height:20px;font-size:6.500px;font-weight:400;color:#555;font-family:'Liberation Sans', sans-serif;transform:scaleX(0.8760);transform-origin:0 0;">5,99</div>
<div class="t" style="left:414.15px;top:34.66px;line-height:20px;font-size:6.500px;font-weight:400;color:#555;font-family:'Liberation Sans', sans-serif;transform:scaleX(0.8760);transform-origin:0 0;">65,89</div>
<div class="t" style="left:432.70px;top:34.66px;line-height:20px;font-size:6.500px;font-weight:400;color:#555;font-family:'Liberation Sans', sans-serif;transform:scaleX(0.8760);transform-origin:0 0;">536039</div>
<div class="t" style="left:530.80px;top:34.39px;line-height:20px;font-size:6.500px;font-weight:400;color:#555;font-family:'Liberation Sans', sans-serif;transform:scaleX(0.8500);transform-origin:0 0;">Boîte à Musiq…</div>
<div class="t" style="left:4.46px;top:44.73px;line-height:20px;font-size:6.305px;font-weight:400;color:#555;font-family:'Liberation Sans', sans-serif;transform:scaleX(0.8763);transform-origin:0 0;">6</div>
<div class="t" style="left:61.30px;top:44.73px;line-height:20px;font-size:6.500px;font-weight:400;color:#555;font-family:'Liberation Sans', sans-serif;transform:scaleX(0.8760);transform-origin:0 0;">21/04/2010</div>
<div class="t" style="left:185.13px;top:44.73px;line-height:20px;font-size:6.500px;font-weight:400;color:#555;font-family:'Liberation Sans', sans-serif;transform:scaleX(0.8760);transform-origin:0 0;">8</div>
<div class="t" style="left:192.60px;top:44.46px;line-height:20px;font-size:6.500px;font-weight:400;color:#555;font-family:'Liberation Sans', sans-serif;transform:scaleX(0.8500);transform-origin:0 0;">Mendelssohn, March…</div>
<div class="t" style="left:253.80px;top:44.73px;line-height:20px;font-size:6.500px;font-weight:400;color:#555;font-family:'Liberation Sans', sans-serif;transform:scaleX(0.8500);transform-origin:0 0;">SMK 47592</div>
<div class="t" style="left:365.62px;top:44.73px;line-height:20px;font-size:6.500px;font-weight:400;color:#555;font-family:'Liberation Sans', sans-serif;transform:scaleX(0.8760);transform-origin:0 0;">8,99</div>
<div class="t" style="left:414.15px;top:44.73px;line-height:20px;font-size:6.500px;font-weight:400;color:#555;font-family:'Liberation Sans', sans-serif;transform:scaleX(0.8760);transform-origin:0 0;">71,92</div>
<div class="t" style="left:432.70px;top:44.73px;line-height:20px;font-size:6.500px;font-weight:400;color:#555;font-family:'Liberation Sans', sans-serif;transform:scaleX(0.8760);transform-origin:0 0;">536039</div>
<div class="t" style="left:530.80px;top:44.46px;line-height:20px;font-size:6.500px;font-weight:400;color:#555;font-family:'Liberation Sans', sans-serif;transform:scaleX(0.8500);transform-origin:0 0;">Boîte à Musiq…</div>
<div class="t" style="left:4.46px;top:54.80px;line-height:20px;font-size:6.305px;font-weight:400;color:#555;font-family:'Liberation Sans', sans-serif;transform:scaleX(0.8763);transform-origin:0 0;">7</div>
<div class="t" style="left:61.30px;top:54.80px;line-height:20px;font-size:6.500px;font-weight:400;color:#555;font-family:'Liberation Sans', sans-serif;transform:scaleX(0.8760);transform-origin:0 0;">21/04/2010</div>
<div class="t" style="left:181.97px;top:54.80px;line-height:20px;font-size:6.500px;font-weight:400;color:#555;font-family:'Liberation Sans', sans-serif;transform:scaleX(0.8760);transform-origin:0 0;">10</div>
<div class="t" style="left:192.60px;top:54.53px;line-height:20px;font-size:6.500px;font-weight:400;color:#555;font-family:'Liberation Sans', sans-serif;transform:scaleX(0.8500);transform-origin:0 0;">Pizzetti, Messa di Re…</div>
<div class="t" style="left:253.80px;top:54.80px;line-height:20px;font-size:6.500px;font-weight:400;color:#555;font-family:'Liberation Sans', sans-serif;transform:scaleX(0.8500);transform-origin:0 0;">CHAN 8964</div>
<div class="t" style="left:365.62px;top:54.80px;line-height:20px;font-size:6.500px;font-weight:400;color:#555;font-family:'Liberation Sans', sans-serif;transform:scaleX(0.8760);transform-origin:0 0;">9,59</div>
<div class="t" style="left:414.15px;top:54.80px;line-height:20px;font-size:6.500px;font-weight:400;color:#555;font-family:'Liberation Sans', sans-serif;transform:scaleX(0.8760);transform-origin:0 0;">95,90</div>
<div class="t" style="left:432.70px;top:54.80px;line-height:20px;font-size:6.500px;font-weight:400;color:#555;font-family:'Liberation Sans', sans-serif;transform:scaleX(0.8760);transform-origin:0 0;">536039</div>
<div class="t" style="left:530.80px;top:54.53px;line-height:20px;font-size:6.500px;font-weight:400;color:#555;font-family:'Liberation Sans', sans-serif;transform:scaleX(0.8500);transform-origin:0 0;">Boîte à Musiq…</div>
<div class="t" style="left:4.46px;top:64.87px;line-height:20px;font-size:6.305px;font-weight:400;color:#555;font-family:'Liberation Sans', sans-serif;transform:scaleX(0.8763);transform-origin:0 0;">8</div>
<div class="t" style="left:61.30px;top:64.87px;line-height:20px;font-size:6.500px;font-weight:400;color:#555;font-family:'Liberation Sans', sans-serif;transform:scaleX(0.8760);transform-origin:0 0;">21/04/2010</div>
<div class="t" style="left:94.10px;top:64.87px;line-height:20px;font-size:6.500px;font-weight:400;color:#555;font-family:'Liberation Sans', sans-serif;transform:scaleX(0.8500);transform-origin:0 0;">LP</div>
<div class="t" style="left:185.13px;top:64.87px;line-height:20px;font-size:6.500px;font-weight:400;color:#555;font-family:'Liberation Sans', sans-serif;transform:scaleX(0.8760);transform-origin:0 0;">6</div>
<div class="t" style="left:192.60px;top:64.60px;line-height:20px;font-size:6.500px;font-weight:400;color:#555;font-family:'Liberation Sans', sans-serif;transform:scaleX(0.8500);transform-origin:0 0;">Divers, Trombone mo…</div>
<div class="t" style="left:253.80px;top:64.87px;line-height:20px;font-size:6.500px;font-weight:400;color:#555;font-family:'Liberation Sans', sans-serif;transform:scaleX(0.8500);transform-origin:0 0;">ADA 581087</div>
<div class="t" style="left:362.45px;top:64.87px;line-height:20px;font-size:6.500px;font-weight:400;color:#555;font-family:'Liberation Sans', sans-serif;transform:scaleX(0.8760);transform-origin:0 0;">10,79</div>
<div class="t" style="left:414.15px;top:64.87px;line-height:20px;font-size:6.500px;font-weight:400;color:#555;font-family:'Liberation Sans', sans-serif;transform:scaleX(0.8760);transform-origin:0 0;">64,74</div>
<div class="t" style="left:432.70px;top:64.87px;line-height:20px;font-size:6.500px;font-weight:400;color:#555;font-family:'Liberation Sans', sans-serif;transform:scaleX(0.8760);transform-origin:0 0;">536039</div>
<div class="t" style="left:530.80px;top:64.60px;line-height:20px;font-size:6.500px;font-weight:400;color:#555;font-family:'Liberation Sans', sans-serif;transform:scaleX(0.8500);transform-origin:0 0;">Boîte à Musiq…</div>
<div class="t" style="left:4.46px;top:74.94px;line-height:20px;font-size:6.305px;font-weight:400;color:#555;font-family:'Liberation Sans', sans-serif;transform:scaleX(0.8763);transform-origin:0 0;">9</div>
<div class="t" style="left:61.30px;top:74.94px;line-height:20px;font-size:6.500px;font-weight:400;color:#555;font-family:'Liberation Sans', sans-serif;transform:scaleX(0.8760);transform-origin:0 0;">21/04/2010</div>
<div class="t" style="left:94.10px;top:74.94px;line-height:20px;font-size:6.500px;font-weight:400;color:#555;font-family:'Liberation Sans', sans-serif;transform:scaleX(0.8500);transform-origin:0 0;">DVD</div>
<div class="t" style="left:185.13px;top:74.94px;line-height:20px;font-size:6.500px;font-weight:400;color:#555;font-family:'Liberation Sans', sans-serif;transform:scaleX(0.8760);transform-origin:0 0;">6</div>
<div class="t" style="left:192.60px;top:74.67px;line-height:20px;font-size:6.500px;font-weight:400;color:#555;font-family:'Liberation Sans', sans-serif;transform:scaleX(0.8500);transform-origin:0 0;">Gershwin, Un Améric…</div>
<div class="t" style="left:253.80px;top:74.94px;line-height:20px;font-size:6.500px;font-weight:400;color:#555;font-family:'Liberation Sans', sans-serif;transform:scaleX(0.8500);transform-origin:0 0;">ACS 8034</div>
<div class="t" style="left:365.62px;top:74.94px;line-height:20px;font-size:6.500px;font-weight:400;color:#555;font-family:'Liberation Sans', sans-serif;transform:scaleX(0.8760);transform-origin:0 0;">5,99</div>
<div class="t" style="left:414.15px;top:74.94px;line-height:20px;font-size:6.500px;font-weight:400;color:#555;font-family:'Liberation Sans', sans-serif;transform:scaleX(0.8760);transform-origin:0 0;">35,94</div>
<div class="t" style="left:432.70px;top:74.94px;line-height:20px;font-size:6.500px;font-weight:400;color:#555;font-family:'Liberation Sans', sans-serif;transform:scaleX(0.8760);transform-origin:0 0;">536039</div>
<div class="t" style="left:530.80px;top:74.67px;line-height:20px;font-size:6.500px;font-weight:400;color:#555;font-family:'Liberation Sans', sans-serif;transform:scaleX(0.8500);transform-origin:0 0;">Boîte à Musiq…</div>
<div class="t" style="left:2.93px;top:85.01px;line-height:20px;font-size:6.305px;font-weight:400;color:#555;font-family:'Liberation Sans', sans-serif;transform:scaleX(0.8763);transform-origin:0 0;">10</div>
<div class="t" style="left:61.30px;top:85.01px;line-height:20px;font-size:6.500px;font-weight:400;color:#555;font-family:'Liberation Sans', sans-serif;transform:scaleX(0.8760);transform-origin:0 0;">05/04/2010</div>
<div class="t" style="left:94.10px;top:85.01px;line-height:20px;font-size:6.500px;font-weight:400;color:#555;font-family:'Liberation Sans', sans-serif;transform:scaleX(0.8500);transform-origin:0 0;">CD</div>
<div class="t" style="left:185.13px;top:85.01px;line-height:20px;font-size:6.500px;font-weight:400;color:#555;font-family:'Liberation Sans', sans-serif;transform:scaleX(0.8760);transform-origin:0 0;">6</div>
<div class="t" style="left:192.60px;top:84.74px;line-height:20px;font-size:6.500px;font-weight:400;color:#555;font-family:'Liberation Sans', sans-serif;transform:scaleX(0.8500);transform-origin:0 0;">Stravinski, Dumbarto…</div>
<div class="t" style="left:253.80px;top:85.01px;line-height:20px;font-size:6.500px;font-weight:400;color:#555;font-family:'Liberation Sans', sans-serif;transform:scaleX(0.8500);transform-origin:0 0;">SMCD 5120</div>
<div class="t" style="left:365.62px;top:85.01px;line-height:20px;font-size:6.500px;font-weight:400;color:#555;font-family:'Liberation Sans', sans-serif;transform:scaleX(0.8760);transform-origin:0 0;">8,99</div>
<div class="t" style="left:414.15px;top:85.01px;line-height:20px;font-size:6.500px;font-weight:400;color:#555;font-family:'Liberation Sans', sans-serif;transform:scaleX(0.8760);transform-origin:0 0;">53,94</div>
<div class="t" style="left:432.70px;top:85.01px;line-height:20px;font-size:6.500px;font-weight:400;color:#555;font-family:'Liberation Sans', sans-serif;transform:scaleX(0.8760);transform-origin:0 0;">536016</div>
<div class="t" style="left:530.80px;top:84.74px;line-height:20px;font-size:6.500px;font-weight:400;color:#555;font-family:'Liberation Sans', sans-serif;transform:scaleX(0.8500);transform-origin:0 0;">Grande Musi…</div>
<div class="t" style="left:3.13px;top:95.08px;line-height:20px;font-size:6.305px;font-weight:400;color:#555;font-family:'Liberation Sans', sans-serif;transform:scaleX(0.8763);transform-origin:0 0;">11</div>
<div class="t" style="left:61.30px;top:95.08px;line-height:20px;font-size:6.500px;font-weight:400;color:#555;font-family:'Liberation Sans', sans-serif;transform:scaleX(0.8760);transform-origin:0 0;">05/04/2010</div>
<div class="t" style="left:185.13px;top:95.08px;line-height:20px;font-size:6.500px;font-weight:400;color:#555;font-family:'Liberation Sans', sans-serif;transform:scaleX(0.8760);transform-origin:0 0;">1</div>
<div class="t" style="left:192.60px;top:94.81px;line-height:20px;font-size:6.500px;font-weight:400;color:#555;font-family:'Liberation Sans', sans-serif;transform:scaleX(0.8500);transform-origin:0 0;">Schubert, Sonate en…</div>
<div class="t" style="left:253.80px;top:95.08px;line-height:20px;font-size:6.500px;font-weight:400;color:#555;font-family:'Liberation Sans', sans-serif;transform:scaleX(0.8500);transform-origin:0 0;">AS-325</div>
<div class="t" style="left:365.62px;top:95.08px;line-height:20px;font-size:6.500px;font-weight:400;color:#555;font-family:'Liberation Sans', sans-serif;transform:scaleX(0.8760);transform-origin:0 0;">9,00</div>
<div class="t" style="left:417.32px;top:95.08px;line-height:20px;font-size:6.500px;font-weight:400;color:#555;font-family:'Liberation Sans', sans-serif;transform:scaleX(0.8760);transform-origin:0 0;">9,00</div>
<div class="t" style="left:432.70px;top:95.08px;line-height:20px;font-size:6.500px;font-weight:400;color:#555;font-family:'Liberation Sans', sans-serif;transform:scaleX(0.8760);transform-origin:0 0;">536016</div>
<div class="t" style="left:530.80px;top:94.81px;line-height:20px;font-size:6.500px;font-weight:400;color:#555;font-family:'Liberation Sans', sans-serif;transform:scaleX(0.8500);transform-origin:0 0;">Grande Musi…</div>
<div class="t" style="left:2.93px;top:105.15px;line-height:20px;font-size:6.305px;font-weight:400;color:#555;font-family:'Liberation Sans', sans-serif;transform:scaleX(0.8763);transform-origin:0 0;">12</div>
<div class="t" style="left:61.30px;top:105.15px;line-height:20px;font-size:6.500px;font-weight:400;color:#555;font-family:'Liberation Sans', sans-serif;transform:scaleX(0.8760);transform-origin:0 0;">05/04/2010</div>
<div class="t" style="left:185.13px;top:105.15px;line-height:20px;font-size:6.500px;font-weight:400;color:#555;font-family:'Liberation Sans', sans-serif;transform:scaleX(0.8760);transform-origin:0 0;">3</div>
<div class="t" style="left:192.60px;top:104.88px;line-height:20px;font-size:6.500px;font-weight:400;color:#555;font-family:'Liberation Sans', sans-serif;transform:scaleX(0.8500);transform-origin:0 0;">Mozart, Symphonie n…</div>
<div class="t" style="left:253.80px;top:105.15px;line-height:20px;font-size:6.500px;font-weight:400;color:#555;font-family:'Liberation Sans', sans-serif;transform:scaleX(0.8500);transform-origin:0 0;">CO-77884</div>
<div class="t" style="left:365.62px;top:105.15px;line-height:20px;font-size:6.500px;font-weight:400;color:#555;font-family:'Liberation Sans', sans-serif;transform:scaleX(0.8760);transform-origin:0 0;">8,99</div>
<div class="t" style="left:414.15px;top:105.15px;line-height:20px;font-size:6.500px;font-weight:400;color:#555;font-family:'Liberation Sans', sans-serif;transform:scaleX(0.8760);transform-origin:0 0;">26,97</div>
<div class="t" style="left:432.70px;top:105.15px;line-height:20px;font-size:6.500px;font-weight:400;color:#555;font-family:'Liberation Sans', sans-serif;transform:scaleX(0.8760);transform-origin:0 0;">536016</div>
<div class="t" style="left:530.80px;top:104.88px;line-height:20px;font-size:6.500px;font-weight:400;color:#555;font-family:'Liberation Sans', sans-serif;transform:scaleX(0.8500);transform-origin:0 0;">Grande Musi…</div>
<div class="t" style="left:2.93px;top:115.22px;line-height:20px;font-size:6.305px;font-weight:400;color:#555;font-family:'Liberation Sans', sans-serif;transform:scaleX(0.8763);transform-origin:0 0;">13</div>
<div class="t" style="left:61.30px;top:115.22px;line-height:20px;font-size:6.500px;font-weight:400;color:#555;font-family:'Liberation Sans', sans-serif;transform:scaleX(0.8760);transform-origin:0 0;">05/04/2010</div>
<div class="t" style="left:185.13px;top:115.22px;line-height:20px;font-size:6.500px;font-weight:400;color:#555;font-family:'Liberation Sans', sans-serif;transform:scaleX(0.8760);transform-origin:0 0;">6</div>
<div class="t" style="left:192.60px;top:114.95px;line-height:20px;font-size:6.500px;font-weight:400;color:#555;font-family:'Liberation Sans', sans-serif;transform:scaleX(0.8500);transform-origin:0 0;">Schoenberg, Ode à N…</div>
<div class="t" style="left:253.80px;top:115.22px;line-height:20px;font-size:6.500px;font-weight:400;color:#555;font-family:'Liberation Sans', sans-serif;transform:scaleX(0.8500);transform-origin:0 0;">CHAN 9116</div>
<div class="t" style="left:365.62px;top:115.22px;line-height:20px;font-size:6.500px;font-weight:400;color:#555;font-family:'Liberation Sans', sans-serif;transform:scaleX(0.8760);transform-origin:0 0;">9,59</div>
<div class="t" style="left:414.15px;top:115.22px;line-height:20px;font-size:6.500px;font-weight:400;color:#555;font-family:'Liberation Sans', sans-serif;transform:scaleX(0.8760);transform-origin:0 0;">57,54</div>
<div class="t" style="left:432.70px;top:115.22px;line-height:20px;font-size:6.500px;font-weight:400;color:#555;font-family:'Liberation Sans', sans-serif;transform:scaleX(0.8760);transform-origin:0 0;">536016</div>
<div class="t" style="left:530.80px;top:114.95px;line-height:20px;font-size:6.500px;font-weight:400;color:#555;font-family:'Liberation Sans', sans-serif;transform:scaleX(0.8500);transform-origin:0 0;">Grande Musi…</div>
</div>
<svg class="a" style="left:275.2px;top:369.8px;" width="7" height="7" viewBox="0 0 7 7"><circle cx="3.5" cy="3.5" r="3.1" fill="none" stroke="#7a7a7a" stroke-width="0.7"/><path d="M3.5,1.8V3.6L5,4.4" fill="none" stroke="#7a7a7a" stroke-width="0.6"/></svg>
<div class="t" style="left:285.60px;top:364.70px;line-height:20px;font-size:6.700px;font-weight:700;color:#454545;font-family:'Liberation Sans', sans-serif;transform:scaleX(0.8763);transform-origin:0 0;">Date d&#x27;expédition</div>
<div class="t" style="left:355.20px;top:363.68px;line-height:20px;font-size:7.200px;font-weight:400;color:#7a7a7a;font-family:'Liberation Sans', sans-serif;transform:scaleX(0.9425);transform-origin:0 0;">Ab</div>
<div class="t" style="left:365.50px;top:364.70px;line-height:20px;font-size:6.700px;font-weight:700;color:#454545;font-family:'Liberation Sans', sans-serif;transform:scaleX(0.8490);transform-origin:0 0;">Support</div>
<div class="t" style="left:403.60px;top:364.08px;line-height:20px;font-size:8.800px;font-weight:400;color:#707070;font-family:'Liberation Sans', sans-serif;transform:scaleX(0.8582);transform-origin:0 0;-webkit-text-stroke:0.15px #707070;">#</div>
<div class="t" style="left:412.30px;top:364.70px;line-height:20px;font-size:6.700px;font-weight:700;color:#454545;font-family:'Liberation Sans', sans-serif;transform:scaleX(0.8832);transform-origin:0 0;">Quantité</div>
<div class="t" style="left:453.70px;top:363.68px;line-height:20px;font-size:7.200px;font-weight:400;color:#7a7a7a;font-family:'Liberation Sans', sans-serif;transform:scaleX(0.9425);transform-origin:0 0;">Ab</div>
<div class="t" style="left:464.00px;top:364.70px;line-height:20px;font-size:6.700px;font-weight:700;color:#454545;font-family:'Liberation Sans', sans-serif;transform:scaleX(0.8465);transform-origin:0 0;">Description</div>
<div class="t" style="left:514.90px;top:363.68px;line-height:20px;font-size:7.200px;font-weight:400;color:#7a7a7a;font-family:'Liberation Sans', sans-serif;transform:scaleX(0.9425);transform-origin:0 0;">Ab</div>
<div class="t" style="left:525.20px;top:364.70px;line-height:20px;font-size:6.700px;font-weight:700;color:#454545;font-family:'Liberation Sans', sans-serif;transform:scaleX(0.8929);transform-origin:0 0;">Numéro label</div>
<div class="t" style="left:582.30px;top:364.08px;line-height:20px;font-size:8.800px;font-weight:400;color:#707070;font-family:'Liberation Sans', sans-serif;transform:scaleX(0.8582);transform-origin:0 0;-webkit-text-stroke:0.15px #707070;">#</div>
<div class="t" style="left:591.00px;top:364.70px;line-height:20px;font-size:6.700px;font-weight:700;color:#454545;font-family:'Liberation Sans', sans-serif;transform:scaleX(0.7896);transform-origin:0 0;">Prix</div>
<div class="t" style="left:643.20px;top:364.08px;line-height:20px;font-size:8.800px;font-weight:400;color:#707070;font-family:'Liberation Sans', sans-serif;transform:scaleX(0.8582);transform-origin:0 0;-webkit-text-stroke:0.15px #707070;">#</div>
<div class="t" style="left:651.90px;top:364.70px;line-height:20px;font-size:6.700px;font-weight:700;color:#454545;font-family:'Liberation Sans', sans-serif;transform:scaleX(0.9022);transform-origin:0 0;">Montant</div>
<div class="t" style="left:693.80px;top:363.68px;line-height:20px;font-size:7.200px;font-weight:400;color:#7a7a7a;font-family:'Liberation Sans', sans-serif;transform:scaleX(0.9425);transform-origin:0 0;">Ab</div>
<div class="t" style="left:704.10px;top:364.70px;line-height:20px;font-size:6.700px;font-weight:700;color:#454545;font-family:'Liberation Sans', sans-serif;transform:scaleX(0.8805);transform-origin:0 0;">Numéro de commande</div>
<div class="t" style="left:791.90px;top:363.68px;line-height:20px;font-size:7.200px;font-weight:400;color:#7a7a7a;font-family:'Liberation Sans', sans-serif;transform:scaleX(0.9425);transform-origin:0 0;">Ab</div>
<div class="t" style="left:802.20px;top:364.70px;line-height:20px;font-size:6.700px;font-weight:700;color:#454545;font-family:'Liberation Sans', sans-serif;transform:scaleX(0.8597);transform-origin:0 0;">Client</div>
<div class="t" style="left:836.00px;top:364.08px;line-height:20px;font-size:8.800px;font-weight:400;color:#707070;font-family:'Liberation Sans', sans-serif;transform:scaleX(0.8582);transform-origin:0 0;-webkit-text-stroke:0.15px #707070;">#</div>
<div class="t" style="left:844.70px;top:364.70px;line-height:20px;font-size:6.700px;font-weight:700;color:#454545;font-family:'Liberation Sans', sans-serif;transform:scaleX(0.8900);transform-origin:0 0;">Numéro de comp</div>
<div class="a" style="left:892px;top:365.4px;width:7.2px;height:143.5px;background:#e8e8e8;"></div>
<div class="a" style="left:892px;top:365.4px;width:7.2px;height:3.6px;background:#cdcdcd;"></div>
<div class="a" style="left:892px;top:369px;width:7.2px;height:8px;background:#fff;border:0.6px solid #dcdcdc;box-sizing:border-box;"></div>
<svg class="a" style="left:892px;top:369px;" width="7" height="8" viewBox="0 0 7 8"><path d="M1.8,5L3.5,3 5.2,5z" fill="#333"/></svg>
<div class="a" style="left:892px;top:378px;width:7px;height:9.4px;background:#fff;border:0.6px solid #dcdcdc;box-sizing:border-box;"></div>
<div class="a" style="left:892px;top:499.5px;width:7.2px;height:8.7px;background:#fff;border:0.6px solid #dcdcdc;box-sizing:border-box;"></div>
<svg class="a" style="left:892px;top:499.5px;" width="7" height="8.7" viewBox="0 0 7 8.7"><path d="M1.8,3.2L3.5,5.2 5.2,3.2z" fill="#333"/></svg>
<div class="a" style="left:262px;top:508.8px;width:630px;height:7.2px;background:#ececec;"></div>
<div class="a" style="left:271.7px;top:508.8px;width:546px;height:7.2px;background:#fff;"></div>
<div class="a" style="left:262.4px;top:508.8px;width:9.3px;height:7.2px;background:#fff;border:0.6px solid #dcdcdc;box-sizing:border-box;"></div>
<svg class="a" style="left:262.4px;top:508.8px;" width="9.3" height="7.2" viewBox="0 0 9.3 7.2"><path d="M5.6,2L3.6,3.6 5.6,5.2z" fill="#333"/></svg>
<div class="a" style="left:883px;top:508.8px;width:8px;height:7.2px;background:#fff;border:0.6px solid #dcdcdc;box-sizing:border-box;"></div>
<svg class="a" style="left:883px;top:508.8px;" width="8" height="7.2" viewBox="0 0 8 7.2"><path d="M3.2,2L5.2,3.6 3.2,5.2z" fill="#333"/></svg>
<div class="a" style="left:892px;top:508.8px;width:7px;height:7.2px;background:#e4e4e4;"></div>
<div class="t" style="left:847.59px;top:408.31px;line-height:40px;font-size:30px;font-weight:700;color:#e8141c;-webkit-text-stroke:0.35px #e8141c">4</div>
<div class="t" style="left:662.78px;top:132.20px;line-height:40px;font-size:30px;font-weight:700;color:#e8141c;-webkit-text-stroke:0.35px #e8141c">3</div>
<div class="a" style="left:0px;top:516px;width:900px;height:16px;background:#173753;"></div>
<div class="a" style="left:879.2px;top:516px;width:19.8px;height:15px;background:#366997;"></div>
<svg class="a" style="left:879.2px;top:516px;" width="20" height="15" viewBox="0 0 20 15"><path d="M5,3.3h10M5,12.4h10" stroke="#b9cde0" stroke-width="0.7"/><path d="M10,4.5v7M10,4.5l-2,2M10,4.5l2,2M10,11.5l-2,-2M10,11.5l2,-2" stroke="#b9cde0" stroke-width="0.6" fill="none"/></svg>
</body></html>
